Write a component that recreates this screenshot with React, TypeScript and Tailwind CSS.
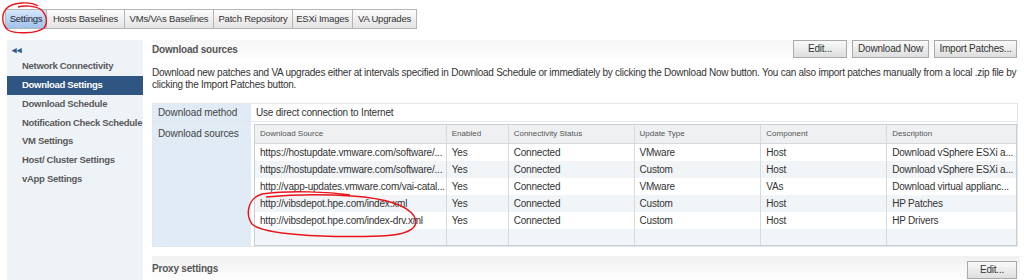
import React from 'react';

const tabs = [
  { label: 'Settings', w: 'w-[42px]' },
  { label: 'Hosts Baselines', w: 'w-[79px]' },
  { label: 'VMs/VAs Baselines', w: 'w-[90px]' },
  { label: 'Patch Repository', w: 'w-[80px]' },
  { label: 'ESXi Images', w: 'w-[61px]' },
  { label: 'VA Upgrades', w: 'w-[65px]' },
];

const navItems = [
  'Network Connectivity',
  'Download Settings',
  'Download Schedule',
  'Notification Check Schedule',
  'VM Settings',
  'Host/ Cluster Settings',
  'vApp Settings',
];

interface SourceRow {
  source: string;
  enabled: string;
  status: string;
  type: string;
  component: string;
  description: string;
}

const sources: SourceRow[] = [
  { source: 'https://hostupdate.vmware.com/software/...', enabled: 'Yes', status: 'Connected', type: 'VMware', component: 'Host', description: 'Download vSphere ESXi a...' },
  { source: 'https://hostupdate.vmware.com/software/...', enabled: 'Yes', status: 'Connected', type: 'Custom', component: 'Host', description: 'Download vSphere ESXi a...' },
  { source: 'http://vapp-updates.vmware.com/vai-catal...', enabled: 'Yes', status: 'Connected', type: 'VMware', component: 'VAs', description: 'Download virtual applianc...' },
  { source: 'http://vibsdepot.hpe.com/index.xml', enabled: 'Yes', status: 'Connected', type: 'Custom', component: 'Host', description: 'HP Patches' },
  { source: 'http://vibsdepot.hpe.com/index-drv.xml', enabled: 'Yes', status: 'Connected', type: 'Custom', component: 'Host', description: 'HP Drivers' },
];

const cols = ['w-[192px]', 'w-[62px]', 'w-[126px]', 'w-[127px]', 'w-[126px]', 'w-[129px]'];
const headers = ['Download Source', 'Enabled', 'Connectivity Status', 'Update Type', 'Component', 'Description'];

const Button: React.FC<{ label: string; width: string }> = ({ label, width }) => (
  <button
    className={`${width} h-[18px] border border-[#a9a9a9] bg-gradient-to-b from-[#fafafa] to-[#dedede] text-[10px] tracking-[-0.2px] text-[#333] leading-none whitespace-nowrap`}
  >
    {label}
  </button>
);

export default function App() {
  return (
    <div
      className="relative w-[1024px] h-[280px] overflow-hidden bg-white text-[#333]"
      style={{ fontFamily: '"Liberation Sans", Arial, sans-serif' }}
    >
      {/* tab strip */}
      <div className="flex pt-[9px] pl-[5px]">
        {tabs.map((t, i) => (
          <div
            key={t.label}
            className={`${t.w} h-[20px] flex items-center justify-center whitespace-nowrap text-[9.5px] tracking-[-0.2px] border border-[#b5b5b5] -ml-px first:ml-0 ${
              i === 0
                ? 'bg-gradient-to-b from-[#d5e6f9] to-[#9fc2ec] text-[#223]'
                : 'bg-gradient-to-b from-[#fbfbfb] to-[#e4e4e4] text-[#333]'
            }`}
          >
            {t.label}
          </div>
        ))}
      </div>

      <div className="flex mt-[11px]">
        {/* sidebar */}
        <div className="ml-[7px] w-[136px] h-[240px] bg-[#eef3f8] pt-[5px]">
          <div className="pl-[5px] text-[9px] font-bold text-[#2b5a8c] leading-[10px] h-[12px]">◂◂</div>
          <div>
            {navItems.map((n) => (
              <div
                key={n}
                className={`h-[18.8px] flex items-center pl-[15px] text-[9.5px] tracking-[-0.3px] font-bold whitespace-nowrap ${
                  n === 'Download Settings' ? 'bg-[#2f5683] text-white' : 'text-[#5a5a5a]'
                }`}
              >
                {n}
              </div>
            ))}
          </div>
        </div>

        {/* main panel */}
        <div className="ml-[9px] w-[868px]">
          <div className="h-[18px] flex items-center justify-between bg-gradient-to-b from-[#f6f6f6] to-[#fdfdfd]">
            <span className="text-[10px] tracking-[-0.2px] font-bold text-[#555]">Download sources</span>
            <div className="flex gap-[5px] mr-[3px]">
              <Button label="Edit..." width="w-[54px]" />
              <Button label="Download Now" width="w-[77px]" />
              <Button label="Import Patches..." width="w-[83px]" />
            </div>
          </div>

          <p className="mt-[9px] text-[10px] tracking-[-0.25px] leading-[12px] text-[#333]">
            Download new patches and VA upgrades either at intervals specified in Download Schedule or immediately by clicking the Download Now button. You can also import patches manually from a local .zip file by clicking the Import Patches button.
          </p>

          <div className="mt-[12px] border border-[#e2e6ea] w-[866px]">
            <div className="flex h-[18px] border-b border-[#e2e6ea]">
              <div className="w-[98px] bg-[#e1ebf5] flex items-center pl-[5px] text-[10px] tracking-[-0.1px] text-[#444]">Download method</div>
              <div className="flex-1 flex items-center pl-[5px] text-[10px] tracking-[-0.2px] text-[#333]">Use direct connection to Internet</div>
            </div>
            <div className="flex">
              <div className="w-[98px] bg-[#e1ebf5] pl-[5px] pt-[4px] text-[10px] tracking-[-0.1px] text-[#444]">Download sources</div>
              <div className="pt-[2px] pb-[0px] pl-[3px]">
                <div className="border border-[#c9ced3] w-[763px]">
                  <div className="flex h-[19px] bg-[#eef0f2] border-b border-[#d6dadd] text-[8px] text-[#555]">
                    {headers.map((h, i) => (
                      <div key={h} className={`${cols[i]} flex items-center pl-[5px] border-r border-[#d6dadd] last:border-r-0`}>
                        {h}
                      </div>
                    ))}
                  </div>
                  {sources.map((r, ri) => (
                    <div key={ri} className={`flex h-[17px] text-[10px] tracking-[-0.2px] text-[#333] ${ri % 2 === 1 ? 'bg-[#f2f5f8]' : 'bg-white'}`}>
                      {[r.source, r.enabled, r.status, r.type, r.component, r.description].map((c, ci) => (
                        <div
                          key={ci}
                          className={`${cols[ci]} flex items-center pl-[5px] whitespace-nowrap overflow-hidden border-r border-[#d6dadd] last:border-r-0`}
                        >
                          {c}
                        </div>
                      ))}
                    </div>
                  ))}
                  <div className="flex h-[16px] bg-[#f2f5f8]">
                    {cols.map((c, ci) => (
                      <div key={ci} className={`${c} border-r border-[#d6dadd] last:border-r-0`} />
                    ))}
                  </div>
                </div>
              </div>
            </div>
          </div>

          <div className="mt-[9px] h-[24px] flex items-center justify-between bg-gradient-to-b from-[#f1f1f1] to-[#fdfdfd]">
            <span className="text-[10px] tracking-[-0.2px] font-bold text-[#555]">Proxy settings</span>
            <div className="mr-[3px]">
              <Button label="Edit..." width="w-[50px]" />
            </div>
          </div>
        </div>
      </div>

      {/* red annotation marks */}
      <svg className="absolute inset-0 pointer-events-none" width="1024" height="280" viewBox="0 0 1024 280">
        <path
          d="M38 6 C30 1 12 2 6 9 C1 15 2 25 8 30 C15 34 36 34 44 28 C48 23 47 14 40 9 C35 6 24 5 18 7"
          fill="none"
          stroke="#e8141a"
          strokeWidth="1.4"
        />
        <path
          d="M350 195 C330 192 290 190 262 194 C248 198 245 214 252 224 C262 234 320 238 380 236 C412 235 420 226 414 216 C406 204 380 198 352 196 C320 194 288 195 266 197"
          fill="none"
          stroke="#e8141a"
          strokeWidth="1.4"
        />
      </svg>
    </div>
  );
}
